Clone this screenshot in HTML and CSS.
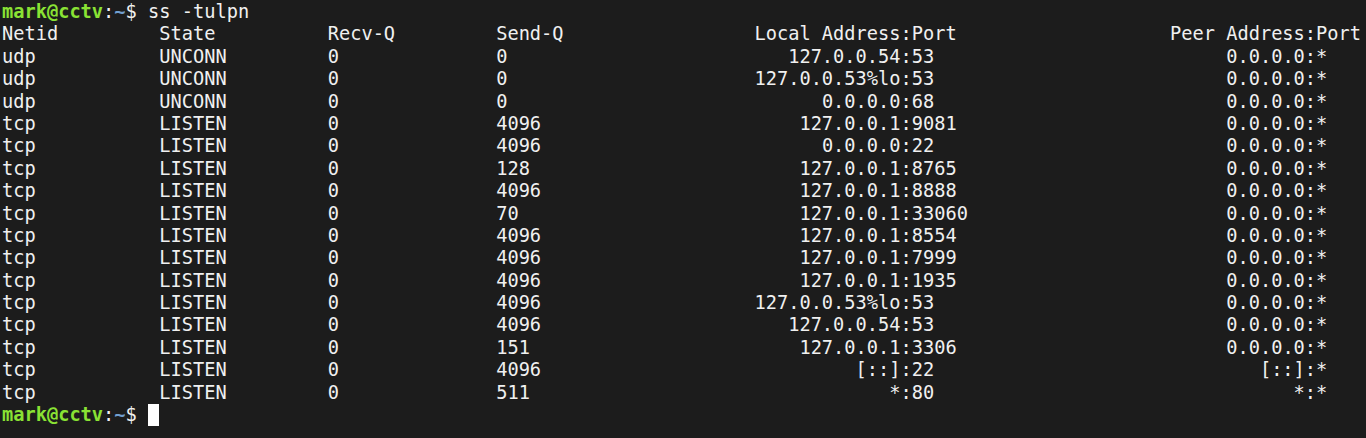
FILE: index.html
```html
<!DOCTYPE html>
<html>
<head>
<meta charset="utf-8">
<title>Terminal</title>
<link rel="stylesheet" href="styles.css">
</head>
<body>
<div class="term">
  <div class="line"><span class="user">mark@cctv</span>:<span class="path">~</span>$ ss -tulpn</div>
  <div class="row"><span>Netid</span><span>State</span><span>Recv-Q</span><span>Send-Q</span><span class="r">Local Address</span><span>:Port</span><span class="r">Peer Address</span><span>:Port</span></div>
  <div class="row"><span>udp</span><span>UNCONN</span><span>0</span><span>0</span><span class="r">127.0.0.54</span><span>:53</span><span class="r">0.0.0.0</span><span>:*</span></div>
  <div class="row"><span>udp</span><span>UNCONN</span><span>0</span><span>0</span><span class="r">127.0.0.53%lo</span><span>:53</span><span class="r">0.0.0.0</span><span>:*</span></div>
  <div class="row"><span>udp</span><span>UNCONN</span><span>0</span><span>0</span><span class="r">0.0.0.0</span><span>:68</span><span class="r">0.0.0.0</span><span>:*</span></div>
  <div class="row"><span>tcp</span><span>LISTEN</span><span>0</span><span>4096</span><span class="r">127.0.0.1</span><span>:9081</span><span class="r">0.0.0.0</span><span>:*</span></div>
  <div class="row"><span>tcp</span><span>LISTEN</span><span>0</span><span>4096</span><span class="r">0.0.0.0</span><span>:22</span><span class="r">0.0.0.0</span><span>:*</span></div>
  <div class="row"><span>tcp</span><span>LISTEN</span><span>0</span><span>128</span><span class="r">127.0.0.1</span><span>:8765</span><span class="r">0.0.0.0</span><span>:*</span></div>
  <div class="row"><span>tcp</span><span>LISTEN</span><span>0</span><span>4096</span><span class="r">127.0.0.1</span><span>:8888</span><span class="r">0.0.0.0</span><span>:*</span></div>
  <div class="row"><span>tcp</span><span>LISTEN</span><span>0</span><span>70</span><span class="r">127.0.0.1</span><span>:33060</span><span class="r">0.0.0.0</span><span>:*</span></div>
  <div class="row"><span>tcp</span><span>LISTEN</span><span>0</span><span>4096</span><span class="r">127.0.0.1</span><span>:8554</span><span class="r">0.0.0.0</span><span>:*</span></div>
  <div class="row"><span>tcp</span><span>LISTEN</span><span>0</span><span>4096</span><span class="r">127.0.0.1</span><span>:7999</span><span class="r">0.0.0.0</span><span>:*</span></div>
  <div class="row"><span>tcp</span><span>LISTEN</span><span>0</span><span>4096</span><span class="r">127.0.0.1</span><span>:1935</span><span class="r">0.0.0.0</span><span>:*</span></div>
  <div class="row"><span>tcp</span><span>LISTEN</span><span>0</span><span>4096</span><span class="r">127.0.0.53%lo</span><span>:53</span><span class="r">0.0.0.0</span><span>:*</span></div>
  <div class="row"><span>tcp</span><span>LISTEN</span><span>0</span><span>4096</span><span class="r">127.0.0.54</span><span>:53</span><span class="r">0.0.0.0</span><span>:*</span></div>
  <div class="row"><span>tcp</span><span>LISTEN</span><span>0</span><span>151</span><span class="r">127.0.0.1</span><span>:3306</span><span class="r">0.0.0.0</span><span>:*</span></div>
  <div class="row"><span>tcp</span><span>LISTEN</span><span>0</span><span>4096</span><span class="r">[::]</span><span>:22</span><span class="r">[::]</span><span>:*</span></div>
  <div class="row"><span>tcp</span><span>LISTEN</span><span>0</span><span>511</span><span class="r">*</span><span>:80</span><span class="r">*</span><span>:*</span></div>
  <div class="line"><span class="user">mark@cctv</span>:<span class="path">~</span>$ <span class="cursor"></span></div>
</div>
</body>
</html>
```

FILE: styles.css
```css
html, body {
  margin: 0;
  padding: 0;
  background: #1c1c1c;
  height: 100%;
}
.term {
  padding: 1px 0 0 2px;
  font-family: "DejaVu Sans Mono", monospace;
  font-size: 18.667px;
  line-height: 22.4px;
  color: #f0f0f0;
}
.line {
  height: 22.4px;
  white-space: pre;
}
.row {
  display: grid;
  grid-template-columns: 14ch 15ch 15ch 15ch 21ch 6ch 30ch auto;
  height: 22.4px;
  white-space: pre;
}
.r {
  text-align: right;
}
.user {
  color: #8ae234;
  font-weight: bold;
}
.path {
  color: #729fcf;
  font-weight: bold;
}
.cursor {
  display: inline-block;
  width: 1ch;
  height: 22px;
  background: #ffffff;
  vertical-align: top;
}
```
